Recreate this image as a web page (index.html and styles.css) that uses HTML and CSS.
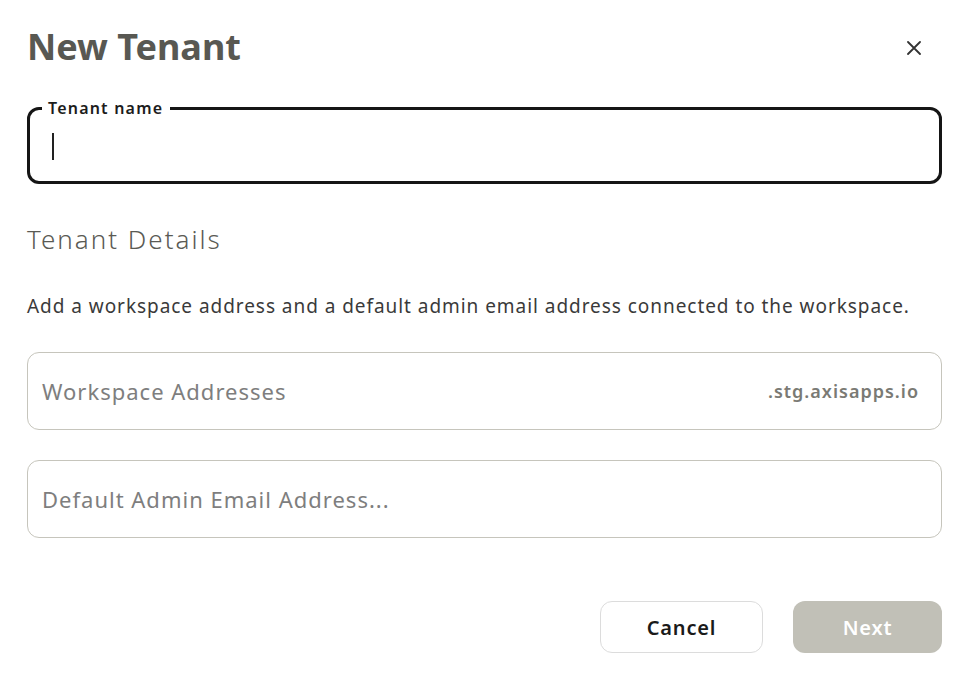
FILE: index.html
```html
<!DOCTYPE html>
<html>
<head>
<meta charset="utf-8">
<link rel="stylesheet" href="styles.css">
</head>
<body>
<div class="dialog">
  <div class="header">
    <h1 class="title">New Tenant</h1>
    <button class="close" aria-label="Close">
      <svg width="14" height="14" viewBox="0 0 14 14"><path d="M1 1L13 13M13 1L1 13" stroke="#333" stroke-width="1.8" stroke-linecap="round"/></svg>
    </button>
  </div>
  <div class="name-field">
    <span class="name-label">Tenant name</span>
    <span class="caret"></span>
  </div>
  <h2 class="section">Tenant Details</h2>
  <p class="desc">Add a workspace address and a default admin email address connected to the workspace.</p>
  <div class="input">
    <span class="placeholder">Workspace Addresses</span>
    <span class="suffix">.stg.axisapps.io</span>
  </div>
  <div class="input">
    <span class="placeholder">Default Admin Email Address...</span>
  </div>
  <div class="actions">
    <button class="btn cancel">Cancel</button>
    <button class="btn next">Next</button>
  </div>
</div>
</body>
</html>
```
FILE: styles.css
```css
html, body {
  margin: 0;
  padding: 0;
  background: #fff;
}
body {
  font-family: "Noto Sans", Lato, sans-serif;
  color: #333;
}
.dialog {
  width: 970px;
  height: 680px;
  box-sizing: border-box;
  padding: 0 28px 0 27px;
  display: flex;
  flex-direction: column;
}
.header {
  display: flex;
  justify-content: space-between;
  align-items: center;
  height: 96px;
}
.title {
  margin: 0;
  font-size: 36px;
  font-weight: 700;
  color: #585852;
  line-height: 1;
  margin-top: -2px;
}
.close {
  border: 0;
  background: none;
  padding: 0;
  margin-right: 21px;
  width: 14px;
  height: 14px;
  display: flex;
}
.name-field {
  margin-top: 11px;
  height: 77px;
  box-sizing: border-box;
  border: 3px solid #151515;
  border-radius: 12px;
  padding: 0 0 0 22px;
  display: flex;
  align-items: center;
  position: relative;
}
.name-label {
  position: absolute;
  top: -12px;
  left: 12px;
  font-size: 16px;
  font-weight: 600;
  letter-spacing: 1.2px;
  color: #1c1c1c;
  padding: 0 7px 0 6px;
  line-height: 20px;
  background: #fff;
}
.caret {
  display: block;
  width: 2px;
  height: 27px;
  background: #222;
  margin-top: 2px;
}
.section {
  margin: 38px 0 0;
  font-size: 26px;
  font-weight: 300;
  letter-spacing: 2px;
  color: #5a5a54;
  line-height: 34px;
}
.desc {
  margin: 37px 0 0;
  font-size: 19px;
  letter-spacing: 0.95px;
  line-height: 26px;
  color: #3a3a3a;
}
.input {
  margin-top: 33px;
  height: 78px;
  box-sizing: border-box;
  border: 1px solid #c6c5bc;
  border-radius: 12px;
  display: flex;
  align-items: center;
  justify-content: space-between;
  padding: 0 22px 0 14px;
}
.input + .input {
  margin-top: 30px;
}
.placeholder {
  font-size: 22px;
  letter-spacing: 1px;
  color: #7e7e7e;
  font-weight: 400;
}
.suffix {
  font-size: 18px;
  font-weight: 600;
  letter-spacing: 1px;
  color: #7a7a74;
}
.actions {
  display: flex;
  justify-content: flex-end;
  gap: 30px;
  margin-top: 63px;
}
.btn {
  height: 52px;
  border-radius: 12px;
  font-family: inherit;
  font-size: 20px;
  font-weight: 600;
  letter-spacing: 0.8px;
}
.cancel {
  width: 163px;
  background: #fff;
  border: 1px solid #dcdcdc;
  color: #1a1a1a;
}
.next {
  width: 149px;
  background: #c1c0b7;
  border: 0;
  color: #fff;
}
```
